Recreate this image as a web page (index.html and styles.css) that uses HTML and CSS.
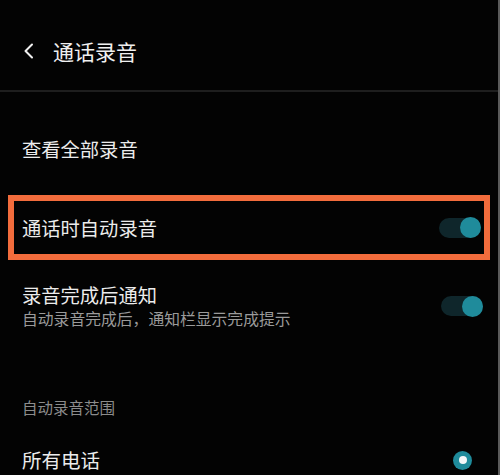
FILE: index.html
```html
<!DOCTYPE html>
<html lang="zh-CN">
<head>
<meta charset="utf-8">
<title>通话录音</title>
<link rel="stylesheet" href="styles.css">
</head>
<body>
<div class="screen">
  <header class="header">
    <svg class="back" width="11" height="16" viewBox="0 0 11 16" aria-hidden="true">
      <polyline points="9,1.5 2.5,8 9,14.5" fill="none" stroke="#f0f0f0" stroke-width="2" stroke-linecap="round" stroke-linejoin="round"/>
    </svg>
    <h1 class="title">通话录音</h1>
  </header>
  <div class="divider"></div>

  <div class="row row-plain">
    <span class="label">查看全部录音</span>
  </div>

  <div class="row row-highlight">
    <span class="label">通话时自动录音</span>
    <span class="toggle"><span class="knob"></span></span>
  </div>

  <div class="row row-notify">
    <div class="text-block">
      <div class="label">录音完成后通知</div>
      <div class="sub">自动录音完成后，通知栏显示完成提示</div>
    </div>
    <span class="toggle"><span class="knob"></span></span>
  </div>

  <div class="section-label">自动录音范围</div>

  <div class="row row-radio">
    <span class="label">所有电话</span>
    <span class="radio"><span class="dot"></span></span>
  </div>
</div>
</body>
</html>
```

FILE: styles.css
```css
html, body {
  margin: 0;
  padding: 0;
  background: #030303;
}

body {
  font-family: "Noto Sans CJK SC", "Noto Sans", sans-serif;
  color: #ececec;
  overflow: hidden;
}

.screen {
  width: 500px;
  height: 475px;
  box-sizing: border-box;
  border-right: 2px solid #5a5a5a;
  overflow: hidden;
}

.header {
  height: 90px;
  box-sizing: border-box;
  padding: 12px 0 0 23px;
  display: flex;
  align-items: center;
}

.back {
  display: block;
}

.title {
  margin: 0 0 0 19px;
  font-size: 21px;
  font-weight: 400;
  line-height: 28px;
  color: #f0f0f0;
}

.divider {
  height: 2px;
  background: #1e1e1e;
}

.row {
  display: flex;
  align-items: center;
  justify-content: space-between;
}

.label {
  font-size: 19.3px;
  line-height: 26px;
  color: #ececec;
}

.row-plain {
  margin-top: 25px;
  height: 64px;
  padding-left: 22px;
}

.row-highlight {
  margin: 14px 8px 0 8px;
  height: 65px;
  box-sizing: border-box;
  border: 6px solid #f26c3c;
  padding: 0 3px 0 8px;
}

.toggle {
  position: relative;
  display: block;
  width: 42px;
  height: 20px;
  border-radius: 10px;
  background: #0f262b;
}

.knob {
  position: absolute;
  right: 0;
  top: -0.5px;
  width: 21px;
  height: 21px;
  border-radius: 50%;
  background: #1f8b9b;
}

.row-notify {
  padding: 22px 15px 0 22px;
}

.text-block {
  display: flex;
  flex-direction: column;
}

.sub {
  font-size: 15.8px;
  line-height: 22px;
  color: #9a9a9a;
}

.section-label {
  margin-top: 66px;
  padding-left: 22px;
  font-size: 15.5px;
  line-height: 22px;
  color: #8c8c8c;
}

.row-radio {
  margin-top: 28px;
  height: 28px;
  padding: 0 26px 0 22px;
}

.row-radio .label {
  font-size: 19.5px;
  line-height: 28px;
}

.radio {
  display: flex;
  align-items: center;
  justify-content: center;
  width: 19px;
  height: 19px;
  border-radius: 50%;
  background: #1f8b9b;
}

.dot {
  width: 8px;
  height: 8px;
  border-radius: 50%;
  background: #f4f8f9;
}
```
